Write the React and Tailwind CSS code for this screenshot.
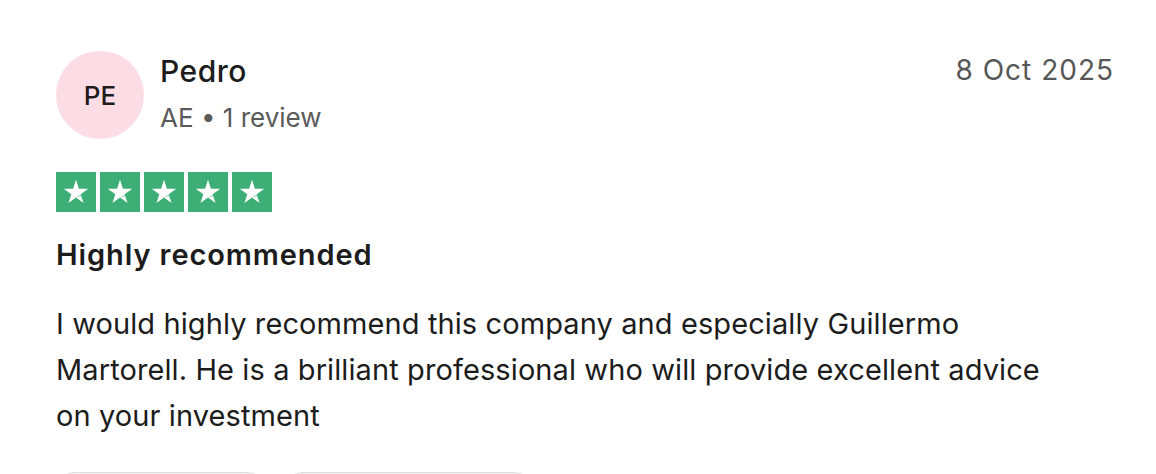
import React from "react";

function Star() {
  return (
    <div className="w-[40px] h-[40px] bg-[#3dae75] flex items-center justify-center">
      <svg width="30" height="30" viewBox="0 0 24 24">
        <polygon
          points="12,2.2 14.35,9.3 21.8,9.3 15.75,13.7 18.05,20.8 12,16.4 5.95,20.8 8.25,13.7 2.2,9.3 9.65,9.3"
          fill="#ffffff"
        />
        <polygon points="15.75,13.7 16.4,15.7 12,16.4" fill="#3dae75" opacity="0.35" />
      </svg>
    </div>
  );
}

export default function App() {
  return (
    <div
      className="w-[1156px] h-[474px] bg-white overflow-hidden text-[#1c1c1c]"
      style={{ fontFamily: "Inter, 'Noto Sans', sans-serif" }}
    >
      <div className="pl-[56px] pr-[42px] pt-[51px]">
        <div className="flex items-start justify-between">
          <div className="flex items-start gap-[16px]">
            <div className="w-[88px] h-[88px] rounded-full bg-[#fcdde6] flex items-center justify-center text-[26px] font-medium text-[#1c1c1c]">
              PE
            </div>
            <div className="flex flex-col">
              <div className="text-[30px] leading-[40px] font-medium tracking-[0.5px]">Pedro</div>
              <div className="text-[26px] leading-[34px] text-[#5a5a5a] mt-[10px]">AE • 1 review</div>
            </div>
          </div>
          <div className="text-[28px] leading-[38px] text-[#575757] tracking-[1px]">8 Oct 2025</div>
        </div>
        <div className="flex gap-[4px] mt-[33px]">
          <Star />
          <Star />
          <Star />
          <Star />
          <Star />
        </div>
        <div className="text-[29px] leading-[40px] font-semibold mt-[23px] tracking-[0.9px]">Highly recommended</div>
        <div className="text-[29px] leading-[46px] mt-[26px] tracking-[0.1px] max-w-[1005px]">
          I would highly recommend this company and especially Guillermo Martorell. He is a brilliant professional who will provide excellent advice on your investment
        </div>
        <div className="flex gap-[10px] mt-[33px] ml-[-4px]">
          <div className="w-[218px] h-[48px] rounded-full border border-[#dcdcdc] bg-[#f5f5f5]"></div>
          <div className="w-[257px] h-[48px] rounded-full border border-[#dcdcdc] bg-[#f5f5f5]"></div>
        </div>
      </div>
    </div>
  );
}
